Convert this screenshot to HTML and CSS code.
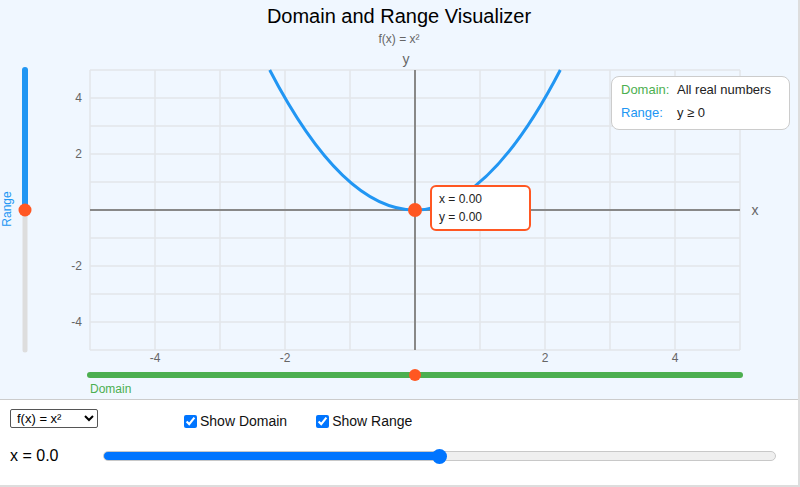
FILE: index.html
```html
<!DOCTYPE html>
<html>
<head>
<meta charset="utf-8">
<link rel="stylesheet" href="styles.css">
</head>
<body>
<div class="app">
  <div class="viz">
    <div class="header">
      <div class="title">Domain and Range Visualizer</div>
      <div class="subtitle">f(x) = x²</div>
    </div>
    <svg class="chart" width="800" height="349" viewBox="0 50 800 349">
      <g class="grid">
        <line x1="90" y1="70" x2="90" y2="350"/>
        <line x1="155" y1="70" x2="155" y2="350"/>
        <line x1="220" y1="70" x2="220" y2="350"/>
        <line x1="285" y1="70" x2="285" y2="350"/>
        <line x1="350" y1="70" x2="350" y2="350"/>
        <line x1="480" y1="70" x2="480" y2="350"/>
        <line x1="545" y1="70" x2="545" y2="350"/>
        <line x1="610" y1="70" x2="610" y2="350"/>
        <line x1="675" y1="70" x2="675" y2="350"/>
        <line x1="740" y1="70" x2="740" y2="350"/>
        <line x1="90" y1="70" x2="740" y2="70"/>
        <line x1="90" y1="98" x2="740" y2="98"/>
        <line x1="90" y1="126" x2="740" y2="126"/>
        <line x1="90" y1="154" x2="740" y2="154"/>
        <line x1="90" y1="182" x2="740" y2="182"/>
        <line x1="90" y1="238" x2="740" y2="238"/>
        <line x1="90" y1="266" x2="740" y2="266"/>
        <line x1="90" y1="294" x2="740" y2="294"/>
        <line x1="90" y1="322" x2="740" y2="322"/>
        <line x1="90" y1="350" x2="740" y2="350"/>
      </g>
      <g class="axes">
        <line x1="90" y1="210" x2="740" y2="210"/>
        <line x1="415" y1="70" x2="415" y2="350"/>
      </g>
      <g class="ticks">
        <text x="155" y="362" text-anchor="middle">-4</text>
        <text x="285" y="362" text-anchor="middle">-2</text>
        <text x="545" y="362" text-anchor="middle">2</text>
        <text x="675" y="362" text-anchor="middle">4</text>
        <text x="82" y="102" text-anchor="end">4</text>
        <text x="82" y="158" text-anchor="end">2</text>
        <text x="82" y="270" text-anchor="end">-2</text>
        <text x="82" y="326" text-anchor="end">-4</text>
      </g>
      <text class="axis-label" x="755" y="215" text-anchor="middle">x</text>
      <text class="axis-label" x="406" y="64" text-anchor="middle">y</text>
      <path class="curve" d="M269.7 70 Q415 350 560.3 70"/>
      <circle class="point" cx="415" cy="210" r="7"/>

      <line class="range-track" x1="25" y1="70" x2="25" y2="350"/>
      <line class="range-fill" x1="25" y1="70" x2="25" y2="210"/>
      <circle class="point" cx="25" cy="210" r="6.5"/>
      <text class="range-label" transform="translate(10.5 209) rotate(-90)" text-anchor="middle">Range</text>

      <line class="domain-fill" x1="90" y1="375" x2="740" y2="375"/>
      <circle class="point" cx="415" cy="375" r="6"/>
      <text class="domain-label" x="90" y="393">Domain</text>
    </svg>
    <div class="legend">
      <div class="legend-row"><span class="key dom">Domain:</span><span>All real numbers</span></div>
      <div class="legend-row"><span class="key rng">Range:</span><span>y ≥ 0</span></div>
    </div>
    <div class="tooltip">
      <div>x = 0.00</div>
      <div>y = 0.00</div>
    </div>
  </div>
  <div class="controls">
    <div class="row top-row">
      <select class="fn-select">
        <option>f(x) = x²</option>
      </select>
      <label class="check first"><input type="checkbox" checked>Show Domain</label>
      <label class="check"><input type="checkbox" checked>Show Range</label>
    </div>
    <div class="row slider-row">
      <span class="xval">x = 0.0</span>
      <input class="xslider" type="range" min="-5" max="5" step="0.1" value="0">
    </div>
  </div>
</div>
</body>
</html>
```
FILE: styles.css
```css
* { box-sizing: border-box; }
html, body { margin: 0; padding: 0; }
body {
  font-family: "Liberation Sans", Arial, sans-serif;
  background: #fff;
  width: 800px;
  height: 487px;
  overflow: hidden;
}
.app {
  width: 800px;
  height: 487px;
  border-right: 2px solid #ddd;
  border-bottom: 2px solid #ddd;
}
.viz {
  position: relative;
  height: 400px;
  background: #f0f7ff;
  border-bottom: 1px solid #ccc;
}
.header {
  height: 50px;
  text-align: center;
  padding-top: 5px;
}
.title {
  font-size: 20px;
  color: #000;
  line-height: 23px;
}
.subtitle {
  font-size: 12px;
  color: #666;
  line-height: 16px;
  margin-top: 3px;
}
.chart { display: block; }
.grid line { stroke: #e3e6ea; stroke-width: 1.5; }
.axes line { stroke: #888; stroke-width: 2; }
.ticks text { font-size: 12px; fill: #666; font-family: "Liberation Sans", Arial, sans-serif; }
.axis-label { font-size: 14px; fill: #666; font-family: "Liberation Sans", Arial, sans-serif; }
.curve { fill: none; stroke: #2196f3; stroke-width: 3; }
.point { fill: #ff5722; }
.range-track { stroke: #dddddd; stroke-width: 5; stroke-linecap: round; }
.range-fill { stroke: #2196f3; stroke-width: 6; stroke-linecap: round; }
.range-label { font-size: 12px; fill: #2196f3; font-family: "Liberation Sans", Arial, sans-serif; }
.domain-fill { stroke: #4caf50; stroke-width: 6; stroke-linecap: round; }
.domain-label { font-size: 12px; fill: #4caf50; font-family: "Liberation Sans", Arial, sans-serif; }

.legend {
  position: absolute;
  left: 611px;
  top: 76px;
  width: 179px;
  height: 54px;
  background: #fff;
  border: 1px solid #ccc;
  border-radius: 8px;
  padding: 1px 0 0 9px;
  font-size: 13px;
  color: #222;
}
.legend-row { display: flex; line-height: 23px; }
.key { width: 56px; }
.dom { color: #4caf50; }
.rng { color: #2196f3; }

.tooltip {
  position: absolute;
  left: 430px;
  top: 185px;
  width: 101px;
  height: 46px;
  background: #fff;
  border: 2px solid #ff5722;
  border-radius: 6px;
  padding: 3px 0 0 7px;
  font-size: 12px;
  line-height: 18px;
  color: #222;
}

.controls {
  padding: 7px 10px 0 10px;
  background: #fff;
}
.row { display: flex; align-items: center; }
.top-row { height: 28px; }
.fn-select {
  width: 88px;
  height: 19px;
  font-family: "Liberation Sans", Arial, sans-serif;
  font-size: 13px;
  padding: 0 2px;
  border: 1px solid #555;
  border-radius: 2px;
  background: #fff;
  color: #000;
  margin-top: -6px;
}
.check {
  display: flex;
  align-items: center;
  font-size: 14px;
  color: #111;
  margin-left: 29px;
}
.check.first { margin-left: 86px; }
.check input {
  width: 13px;
  height: 13px;
  margin: 0 3px 0 0;
  accent-color: #0075ff;
}
.slider-row { height: 40px; margin-top: 1px; }
.xval { font-size: 16px; color: #000; width: 93px; }
.xslider {
  -webkit-appearance: none;
  appearance: none;
  width: 673px;
  height: 10px;
  margin: 0;
  border-radius: 5px;
  border: 1px solid #c8c8c8;
  background: linear-gradient(to right, #0075ff 0%, #0075ff 50%, #efefef 50%, #efefef 100%);
  outline: none;
}
.xslider::-webkit-slider-thumb {
  -webkit-appearance: none;
  appearance: none;
  width: 15px;
  height: 15px;
  border-radius: 50%;
  background: #0075ff;
  border: none;
}
```
